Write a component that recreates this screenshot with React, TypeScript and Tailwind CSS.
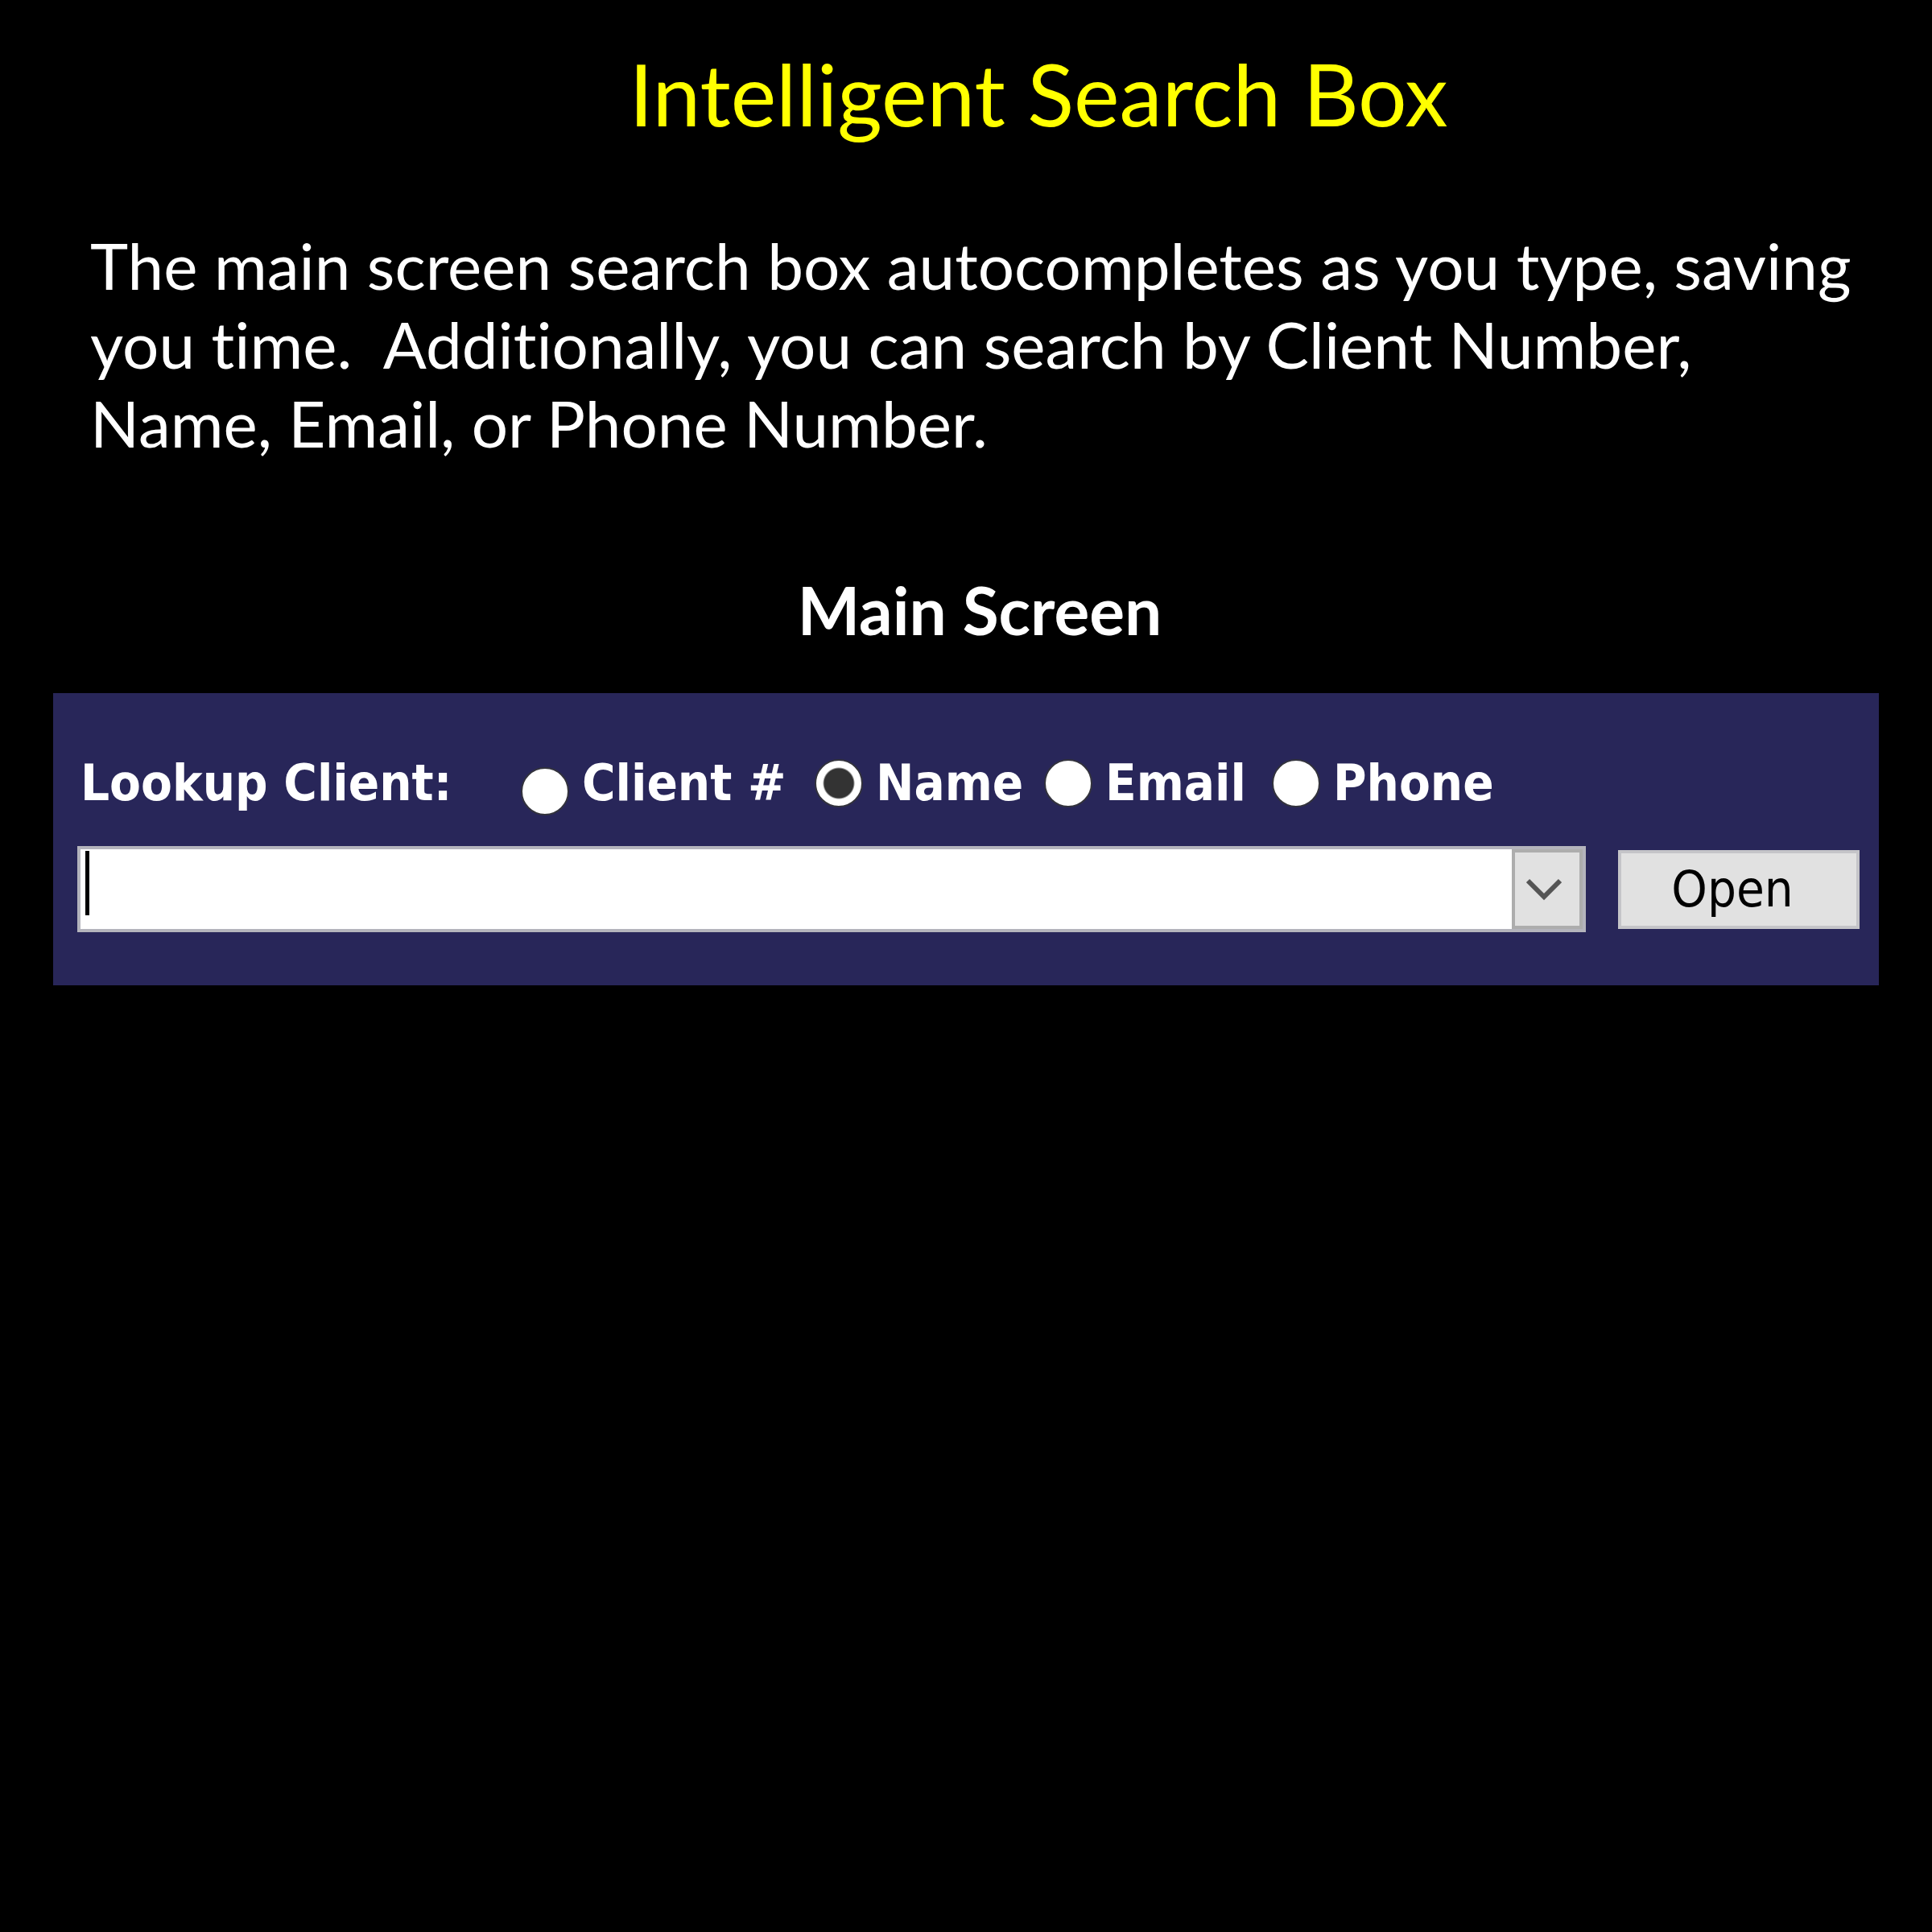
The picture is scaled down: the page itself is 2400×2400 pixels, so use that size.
import { useState } from "react";

const lookupFields = [
  { id: "client", label: "Client #", offset: "mt-5" },
  { id: "name", label: "Name", offset: "" },
  { id: "email", label: "Email", offset: "" },
  { id: "phone", label: "Phone", offset: "" },
];

function LookupPanel() {
  const [field, setField] = useState("name");

  return (
    <form
      className="bg-[#282659] pl-[30px] pr-6 pt-[72px] pb-[66px] font-['DejaVu_Sans_Condensed','DejaVu_Sans',sans-serif] [font-stretch:condensed]"
      onSubmit={(e) => e.preventDefault()}
    >
      <fieldset className="grid grid-cols-[551px_365px_285px_283px_auto] items-center h-20 text-white text-[63px] leading-[80px] font-bold whitespace-nowrap">
        <label htmlFor="lookup" className="pl-1">Lookup Client:</label>
        {lookupFields.map((f) => (
          <div key={f.id} className="flex items-center gap-4">
            <input
              type="radio"
              id={f.id}
              name="field"
              checked={field === f.id}
              onChange={() => setField(f.id)}
              className={`appearance-none shrink-0 size-[60px] rounded-full bg-white border-2 border-[#33333d] checked:bg-[radial-gradient(circle,#333333_18px,#ffffff_20px)] ${f.offset}`}
            />
            <label htmlFor={f.id}>{f.label}</label>
          </div>
        ))}
      </fieldset>

      <div className="mt-[38px] flex items-center gap-10">
        <div className="relative flex grow h-[107px] bg-white border-4 border-[#b4b4bc]">
          <input
            id="lookup"
            type="text"
            autoComplete="off"
            className="grow min-w-0 px-2 text-[63px] text-black outline-none"
          />
          <span className="absolute left-[6px] top-[2px] w-[5px] h-20 bg-black" />
          <button
            type="button"
            aria-label="Show matches"
            className="flex items-center justify-center w-[88px] pr-2 bg-[#e1e1e1] border-4 border-[#adadad]"
          >
            <svg viewBox="0 0 44 28" className="w-11 h-7" fill="none" stroke="#555555" strokeWidth="6">
              <path d="M2 3 L22 23 L42 3" />
            </svg>
          </button>
        </div>
        <button
          type="submit"
          className="w-[300px] h-[98px] pr-4 bg-[#e1e1e1] border-4 border-[#c4c4c8] text-black text-[63px] leading-[80px]"
        >
          Open
        </button>
      </div>
    </form>
  );
}

export default function App() {
  return (
    <main className="min-h-screen bg-black text-white px-[66px] pt-14 font-[Lato,sans-serif] [font-variant-ligatures:none]">
      <h1 className="pl-[180px] text-center text-[107px] leading-[120px] text-[#ffff00]">
        Intelligent Search Box
      </h1>
      <p className="mt-[104px] pl-[46px] text-[80px] leading-[98px] whitespace-pre-line">
        The main screen search box autocompletes as you type, saving{"\n"}
        you time. &nbsp;Additionally, you can search by Client Number,{"\n"}
        Name, Email, or Phone Number.
      </p>
      <h2 className="mt-[134px] mb-[55px] pl-[34px] text-center text-[82px] leading-[98px] font-bold">
        Main Screen
      </h2>
      <LookupPanel />
    </main>
  );
}
